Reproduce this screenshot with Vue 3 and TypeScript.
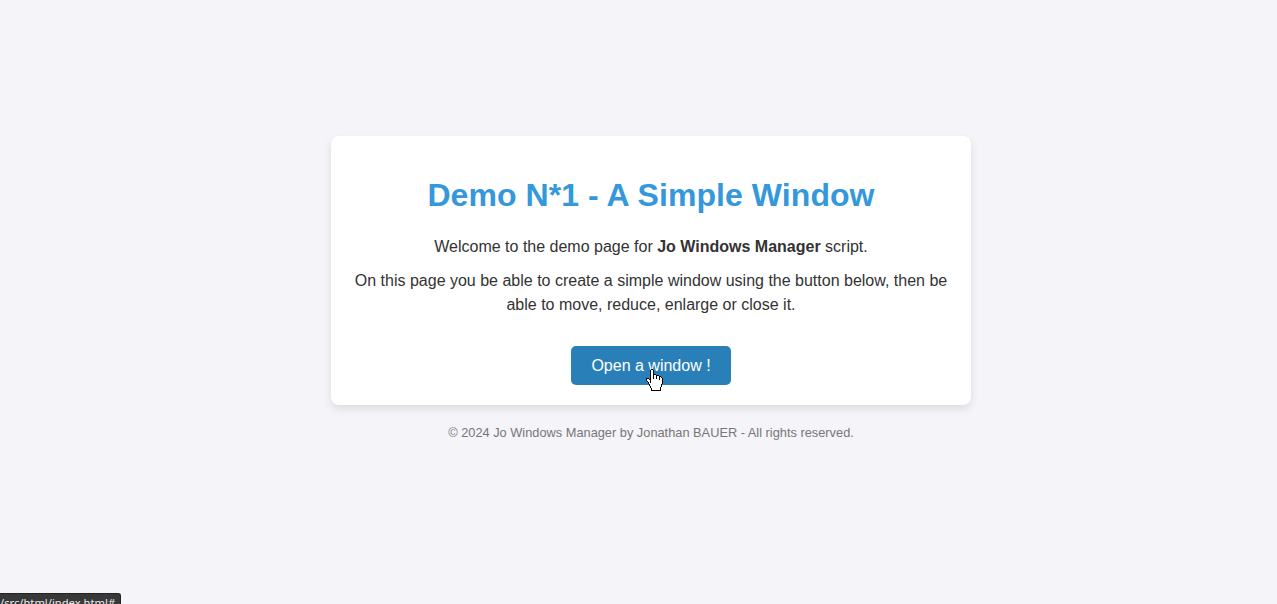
<script setup lang="ts">
const cursorRows: string[] = [
  '.....XX..........',
  '....XooX.........',
  '....XooX.........',
  '....XooX.........',
  '....XooX.........',
  '....XooXXX.......',
  '....XooXooXXX....',
  '....XooXooXooXX..',
  '....XooXooXooXoX.',
  'XXX.XooXooXooXooX',
  'XooXXooooooooXooX',
  'XoooXoooooooooooX',
  '.XooXoooooooooooX',
  '..XoXoooooooooooX',
  '..XoooooooooooooX',
  '...XoooooooooooX.',
  '...XoooooooooooX.',
  '....XooooooooooX.',
  '....XoooooooooX..',
  '.....XooooooooX..',
  '.....XooooooooX..',
  '.....XXXXXXXXXX..',
]

function pixels(mark: string): string {
  return cursorRows
    .flatMap((row, y) => [...row].map((c, x) => (c === mark ? `M${x} ${y}h1v1h-1z` : '')))
    .join('')
}
</script>

<template>
  <div class="page">
    <main class="card">
      <h1>Demo N*1 - A Simple Window</h1>
      <p>Welcome to the demo page for <strong>Jo Windows Manager</strong> script.</p>
      <p>On this page you be able to create a simple window using the button below, then be able to move, reduce, enlarge or close it.</p>
      <button class="open" type="button">
        Open a window !
        <svg class="cursor" width="17" height="22" viewBox="0 0 17 22" shape-rendering="crispEdges" aria-hidden="true">
          <path :d="pixels('o')" fill="#fff" />
          <path :d="pixels('X')" fill="#000" />
        </svg>
      </button>
    </main>
    <footer>© 2024 Jo Windows Manager by Jonathan BAUER - All rights reserved.</footer>
    <div class="status">/src/html/index.html#</div>
  </div>
</template>

<style>
body {
  background: #f4f4f9;
}
</style>

<style scoped>
.page {
  position: relative;
  box-sizing: border-box;
  height: 604px;
  overflow: hidden;
  padding: 136px 0 0 25px;
  display: flex;
  flex-direction: column;
  align-items: center;
  background: #f4f4f9;
  color: #333;
  font: 16px/24px "Liberation Sans", Arial, sans-serif;
}
.card {
  box-sizing: border-box;
  width: 640px;
  height: 269px;
  padding: 35px 20px 20px;
  background: #fff;
  border-radius: 8px;
  box-shadow: 0 4px 8px rgba(0, 0, 0, 0.1);
  text-align: center;
}
h1 {
  margin: 0 0 16px;
  color: #3498db;
  font-size: 32px;
  line-height: 48px;
  letter-spacing: 0.07px;
}
p {
  margin: 0 0 10px;
}
.open {
  position: relative;
  display: block;
  width: 160px;
  height: 39px;
  margin: 29px auto 0;
  padding: 0;
  border: 0;
  border-radius: 5px;
  background: #2980b9;
  color: #fff;
  font: inherit;
}
.cursor {
  position: absolute;
  left: 75px;
  top: 23px;
}
footer {
  margin-top: 16px;
  color: #777;
  font-size: 12.8px;
}
.status {
  position: absolute;
  left: 0;
  bottom: 0;
  box-sizing: border-box;
  width: 121px;
  height: 11px;
  overflow: hidden;
  border: 1px solid #222226;
  border-width: 1px 1px 0 0;
  border-radius: 0 3px 0 0;
  background: #383838;
  color: #e8e8e8;
  font: 11.2px/18px "Noto Sans", sans-serif;
  white-space: nowrap;
}
</style>
